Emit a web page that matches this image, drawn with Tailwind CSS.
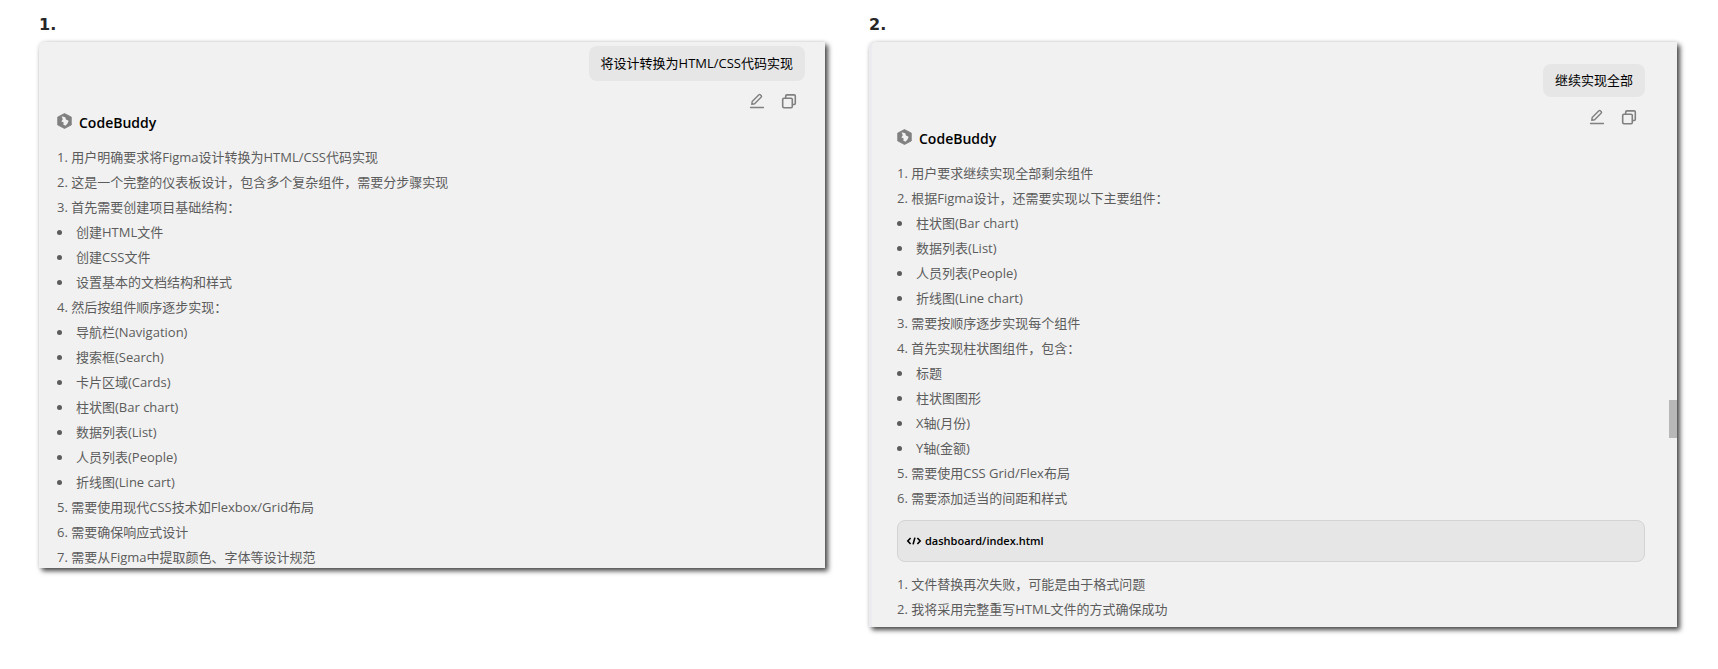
<!DOCTYPE html>
<html lang="zh-CN">
<head>
    <meta charset="UTF-8">
    <meta name="viewport" content="width=device-width, initial-scale=1.0">
    <title>CodeBuddy</title>
    <script src="https://cdn.jsdelivr.net/npm/@tailwindcss/browser@4"></script>
</head>
<body class="bg-white min-h-screen text-[13px] text-[#5c5c5c] font-['Open_Sans','Noto_Sans_CJK_SC',sans-serif]">
    <!-- Shared icons -->
    <svg class="hidden">
        <symbol id="logo" viewBox="0 0 16 16">
            <path fill="#808080" d="M7.5 0.5 14.3 4.1V11.9L7.5 15.5 0.7 11.9V4.1Z" stroke="#808080" stroke-width="0.8" stroke-linejoin="round"/>
            <path fill="#f1f1f1" d="M4.6 3.2 8.2 4.2 9 6.4 11.6 7.8 10.8 10 8.6 12.8 6.2 11.4 6.8 9.6 4.4 8.6 5.8 6.2Z"/>
        </symbol>
        <symbol id="pen" viewBox="0 0 16 16">
            <path fill="none" stroke="#808080" stroke-width="1.4" stroke-linejoin="round" d="M2.8 11.3 3.2 8.4 9.9 1.7Q10.6 1.1 11.3 1.7L12.3 2.7Q12.9 3.4 12.3 4.1L5.6 10.8Z"/>
            <path stroke="#808080" stroke-width="1.3" stroke-linecap="round" d="M1.5 14.5H14.5"/>
        </symbol>
        <symbol id="copy" viewBox="0 0 16 16">
            <rect x="1.7" y="5.2" width="9.6" height="9.6" rx="1.2" fill="none" stroke="#808080" stroke-width="1.6"/>
            <path fill="none" stroke="#808080" stroke-width="1.6" d="M4.7 5V3.1Q4.7 1.9 5.9 1.9H13.1Q14.3 1.9 14.3 3.1V10.3Q14.3 11.5 13.1 11.5H11.4"/>
        </symbol>
    </svg>

    <main class="grid grid-cols-[786fr_808fr] items-start gap-11 pl-[39px] pr-[41px] pt-3">
        <!-- First turn -->
        <section>
            <h2 class="h-[30px] leading-[26px] text-base font-bold text-[#262626] font-['DejaVu_Sans',sans-serif]">1.</h2>
            <div class="overflow-hidden bg-[#f1f1f1] rounded-tl-md pt-1 pl-[18px] pr-5 shadow-[3px_3px_5px_rgba(0,0,0,0.7),0_0_4px_rgba(0,0,0,0.15)]">
                <div class="flex flex-col items-end">
                    <p class="bg-[#e6e6e6] text-black rounded-lg px-3 leading-[35px]">将设计转换为HTML/CSS代码实现</p>
                    <div class="flex gap-4 mt-3 mr-2">
                        <button type="button" aria-label="编辑"><svg class="size-4"><use href="#pen"/></svg></button>
                        <button type="button" aria-label="复制"><svg class="size-4"><use href="#copy"/></svg></button>
                    </div>
                </div>
                <div class="flex items-start gap-[6px] mt-1">
                    <svg class="size-4"><use href="#logo"/></svg>
                    <h3 class="text-sm leading-5 font-semibold text-black">CodeBuddy</h3>
                </div>
                <ul class="mt-3 -mb-0.5 leading-[25px]">
                    <li>1. 用户明确要求将Figma设计转换为HTML/CSS代码实现</li>
                    <li>2. 这是一个完整的仪表板设计，包含多个复杂组件，需要分步骤实现</li>
                    <li>3. 首先需要创建项目基础结构：
                        <ul>
                            <li class="flex items-center gap-[14px]"><i class="size-[5px] rounded-full bg-[#5c5c5c]"></i>创建HTML文件</li>
                            <li class="flex items-center gap-[14px]"><i class="size-[5px] rounded-full bg-[#5c5c5c]"></i>创建CSS文件</li>
                            <li class="flex items-center gap-[14px]"><i class="size-[5px] rounded-full bg-[#5c5c5c]"></i>设置基本的文档结构和样式</li>
                        </ul>
                    </li>
                    <li>4. 然后按组件顺序逐步实现：
                        <ul>
                            <li class="flex items-center gap-[14px]"><i class="size-[5px] rounded-full bg-[#5c5c5c]"></i>导航栏(Navigation)</li>
                            <li class="flex items-center gap-[14px]"><i class="size-[5px] rounded-full bg-[#5c5c5c]"></i>搜索框(Search)</li>
                            <li class="flex items-center gap-[14px]"><i class="size-[5px] rounded-full bg-[#5c5c5c]"></i>卡片区域(Cards)</li>
                            <li class="flex items-center gap-[14px]"><i class="size-[5px] rounded-full bg-[#5c5c5c]"></i>柱状图(Bar chart)</li>
                            <li class="flex items-center gap-[14px]"><i class="size-[5px] rounded-full bg-[#5c5c5c]"></i>数据列表(List)</li>
                            <li class="flex items-center gap-[14px]"><i class="size-[5px] rounded-full bg-[#5c5c5c]"></i>人员列表(People)</li>
                            <li class="flex items-center gap-[14px]"><i class="size-[5px] rounded-full bg-[#5c5c5c]"></i>折线图(Line cart)</li>
                        </ul>
                    </li>
                    <li>5. 需要使用现代CSS技术如Flexbox/Grid布局</li>
                    <li>6. 需要确保响应式设计</li>
                    <li>7. 需要从Figma中提取颜色、字体等设计规范</li>
                </ul>
            </div>
        </section>

        <!-- Second turn -->
        <section>
            <h2 class="h-[30px] leading-[26px] text-base font-bold text-[#262626] font-['DejaVu_Sans',sans-serif]">2.</h2>
            <div class="relative bg-[#f1f1f1] rounded-tl-md border-l-3 border-[#ececf0] pt-[22px] pb-[5px] pl-[25px] pr-8 shadow-[3px_3px_5px_rgba(0,0,0,0.7),0_0_4px_rgba(0,0,0,0.15)]">
                <div class="absolute right-0 top-[358px] w-2 h-[38px] bg-[#b8b8b8]"></div>
                <div class="flex flex-col items-end">
                    <p class="bg-[#e6e6e6] text-black rounded-lg px-3 leading-[33px]">继续实现全部</p>
                    <div class="flex gap-4 mt-3 mr-2">
                        <button type="button" aria-label="编辑"><svg class="size-4"><use href="#pen"/></svg></button>
                        <button type="button" aria-label="复制"><svg class="size-4"><use href="#copy"/></svg></button>
                    </div>
                </div>
                <div class="flex items-start gap-[6px] mt-1">
                    <svg class="size-4"><use href="#logo"/></svg>
                    <h3 class="text-sm leading-5 font-semibold text-black">CodeBuddy</h3>
                </div>
                <ul class="mt-3 leading-[25px]">
                    <li>1. 用户要求继续实现全部剩余组件</li>
                    <li>2. 根据Figma设计，还需要实现以下主要组件：
                        <ul>
                            <li class="flex items-center gap-[14px]"><i class="size-[5px] rounded-full bg-[#5c5c5c]"></i>柱状图(Bar chart)</li>
                            <li class="flex items-center gap-[14px]"><i class="size-[5px] rounded-full bg-[#5c5c5c]"></i>数据列表(List)</li>
                            <li class="flex items-center gap-[14px]"><i class="size-[5px] rounded-full bg-[#5c5c5c]"></i>人员列表(People)</li>
                            <li class="flex items-center gap-[14px]"><i class="size-[5px] rounded-full bg-[#5c5c5c]"></i>折线图(Line chart)</li>
                        </ul>
                    </li>
                    <li>3. 需要按顺序逐步实现每个组件</li>
                    <li>4. 首先实现柱状图组件，包含：
                        <ul>
                            <li class="flex items-center gap-[14px]"><i class="size-[5px] rounded-full bg-[#5c5c5c]"></i>标题</li>
                            <li class="flex items-center gap-[14px]"><i class="size-[5px] rounded-full bg-[#5c5c5c]"></i>柱状图图形</li>
                            <li class="flex items-center gap-[14px]"><i class="size-[5px] rounded-full bg-[#5c5c5c]"></i>X轴(月份)</li>
                            <li class="flex items-center gap-[14px]"><i class="size-[5px] rounded-full bg-[#5c5c5c]"></i>Y轴(金额)</li>
                        </ul>
                    </li>
                    <li>5. 需要使用CSS Grid/Flex布局</li>
                    <li>6. 需要添加适当的间距和样式</li>
                </ul>
                <div class="flex items-center gap-[3px] h-[42px] mt-[9px] mb-[10px] px-2 bg-[#e6e6e6] border border-[#d3d3d3] rounded-lg text-[11px] font-semibold text-black">
                    <svg class="w-4 h-3" viewBox="0 0 16 12" fill="none" stroke="#000" stroke-width="1.6">
                        <path d="M4.6 3 1.8 6 4.6 9M11.4 3 14.2 6 11.4 9M8.9 2.6 7.1 9.4"/>
                    </svg>
                    dashboard/index.html
                </div>
                <ul class="leading-[25px]">
                    <li>1. 文件替换再次失败，可能是由于格式问题</li>
                    <li>2. 我将采用完整重写HTML文件的方式确保成功</li>
                </ul>
            </div>
        </section>
    </main>
</body>
</html>
